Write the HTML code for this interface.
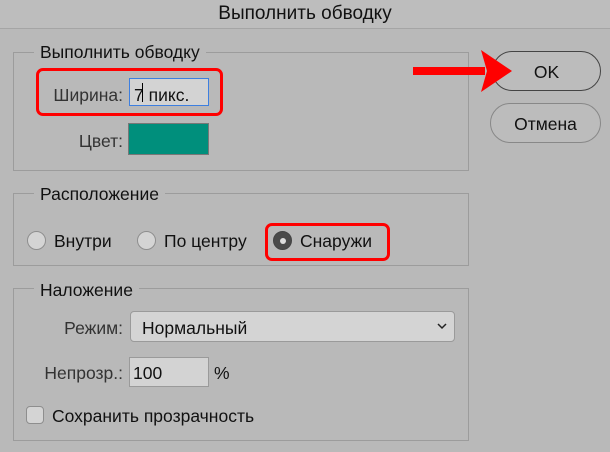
<!DOCTYPE html><html><head><meta charset="utf-8"><style>
body{margin:0;width:610px;height:452px;background:#b9b9b9;font-family:"Liberation Sans",sans-serif;color:#111;position:relative;overflow:hidden;font-size:17.5px}
.a{position:absolute;white-space:nowrap}
.g{position:absolute;border:1px solid #9c9c9c;box-sizing:border-box}
.lg{position:absolute;background:#b9b9b9;padding:0 6px;font-size:17.5px;line-height:18px}
.in{position:absolute;background:#d3d3d3;border:1px solid #9a9a9a;box-sizing:border-box}
.r{position:absolute;width:19px;height:19px;border-radius:50%;background:#d4d4d4;border:1px solid #8e8e8e;box-sizing:border-box}
.red{position:absolute;border:3px solid #f00;border-radius:7px;box-sizing:border-box}
.lbl{color:#333;text-align:right}
</style></head><body>
<div class="a" style="left:0;top:0;width:610px;height:28px;background:#bdbdbd;border-bottom:1px solid #a5a5a5"></div>
<div class="a" style="left:0;width:610px;top:3px;text-align:center;font-size:19px">Выполнить обводку</div>

<div class="g" style="left:13px;top:52px;width:456px;height:119px"></div>
<div class="lg" style="left:34px;top:43px">Выполнить обводку</div>
<div class="a lbl" style="right:487px;top:85px">Ширина:</div>
<div class="in" style="left:129px;top:78px;width:80px;height:28px;border:1px solid #3d7fe0"></div>
<div class="a" style="left:134px;top:85px">7 пикс.</div>
<div class="a" style="left:142px;top:83px;width:1px;height:19px;background:#000"></div>
<div class="red" style="left:36px;top:68px;width:187px;height:48px"></div>
<div class="a lbl" style="right:487px;top:131px">Цвет:</div>
<div class="a" style="left:128px;top:123px;width:81px;height:32px;background:#008f7c;border:1px solid #777;box-sizing:border-box"></div>

<div class="g" style="left:13px;top:193px;width:456px;height:73px"></div>
<div class="lg" style="left:34px;top:185px">Расположение</div>
<div class="r" style="left:27px;top:231px"></div><div class="a" style="left:54px;top:231px">Внутри</div>
<div class="r" style="left:137px;top:231px"></div><div class="a" style="left:164px;top:231px">По центру</div>
<div class="r" style="left:273px;top:231px;background:#4a4a4a;border-color:#444"></div>
<div class="a" style="left:280px;top:238px;width:6px;height:6px;border-radius:50%;background:#ddd"></div>
<div class="a" style="left:300px;top:231px">Снаружи</div>
<div class="red" style="left:265px;top:223px;width:125px;height:38px"></div>

<div class="g" style="left:13px;top:288px;width:456px;height:153px"></div>
<div class="lg" style="left:34px;top:281px">Наложение</div>
<div class="a lbl" style="right:487px;top:318px">Режим:</div>
<div class="in" style="left:130px;top:311px;width:325px;height:31px;border-radius:4px;background:#d4d4d4"></div>
<div class="a" style="left:142px;top:318px">Нормальный</div>
<svg class="a" style="left:437px;top:322px" width="10" height="8"><path d="M1 2 L5 6 L9 2" fill="none" stroke="#222" stroke-width="1.5"/></svg>
<div class="a lbl" style="right:487px;top:363px">Непрозр.:</div>
<div class="in" style="left:129px;top:357px;width:80px;height:30px"></div>
<div class="a" style="left:133px;top:363px">100</div>
<div class="a" style="left:214px;top:363px">%</div>
<div class="a" style="left:26px;top:406px;width:18px;height:18px;border-radius:4px;background:#d4d4d4;border:1px solid #8e8e8e;box-sizing:border-box"></div>
<div class="a" style="left:52px;top:406px">Сохранить прозрачность</div>

<div class="a" style="left:492px;top:51px;width:109px;height:40px;border:1.5px solid #444;border-radius:20px;box-sizing:border-box;background:#bcbcbc"></div>
<div class="a" style="left:492px;width:109px;top:62px;text-align:center">OK</div>
<div class="a" style="left:490px;top:103px;width:111px;height:40px;border:1px solid #888;border-radius:20px;box-sizing:border-box;background:#bcbcbc"></div>
<div class="a" style="left:490px;width:111px;top:114px;text-align:center">Отмена</div>

<svg class="a" style="left:0;top:0" width="610" height="120"><rect x="413" y="67" width="72" height="8" fill="#f00"/><polygon points="481,50 512,71 481,92 487,71" fill="#f00"/></svg>
</body></html>
